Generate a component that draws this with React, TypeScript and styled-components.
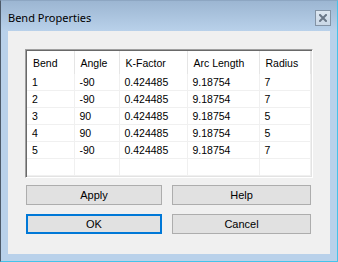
import React from 'react';
import styled, { createGlobalStyle } from 'styled-components';

const GlobalStyle = createGlobalStyle`
  html, body {
    margin: 0;
    padding: 0;
    background: #b9d1ea;
  }
`;

const Window = styled.div`
  width: 338px;
  height: 262px;
  box-sizing: border-box;
  display: flex;
  flex-direction: column;
  background: #b9d1ea;
  border-left: 1px solid #4d5a69;
  border-top: 1px solid #8da6c2;
  border-right: 1px solid #45c3ea;
  border-bottom: 1px solid #45c3ea;
  font-family: 'Liberation Sans', Arial, sans-serif;
`;

const TitleBar = styled.div`
  height: 30px;
  flex: none;
  display: flex;
  align-items: center;
  justify-content: space-between;
  padding: 0 6px 0 7px;
  background: linear-gradient(to bottom, #9cb6d2, #b9d1ea);
`;

const Title = styled.span`
  font-family: 'Noto Sans', 'Open Sans', sans-serif;
  font-size: 11px;
  color: #000;
  margin-top: 2px;
`;

const CloseButton = styled.div`
  width: 14px;
  height: 14px;
  border: 1px solid #8393a5;
  background: linear-gradient(to bottom, #dde7f1, #c9d7e6);
  display: flex;
  align-items: center;
  justify-content: center;
  margin-top: 3px;
`;

const Client = styled.div`
  flex: none;
  height: 223px;
  margin: 0 7px;
  box-sizing: border-box;
  background: #f0f0f0;
  padding: 18px 17px 0 17px;
  display: flex;
  flex-direction: column;
`;

const ListBox = styled.div`
  height: 129px;
  box-sizing: border-box;
  background: #fff;
  border: 1px solid;
  border-color: #a0a0a0 #fff #fff #a0a0a0;
  box-shadow: inset 1px 1px 0 #696969, inset -1px -1px 0 #e3e3e3;
  padding: 1px;
  overflow: hidden;
`;

const Grid = styled.table`
  border-collapse: collapse;
  table-layout: fixed;
  width: 100%;
  font-size: 10.5px;
  color: #000;
`;

const Col = styled.col<{ $w?: number }>`
  width: ${p => (p.$w ? `${p.$w}px` : 'auto')};
`;

const HeadCell = styled.th`
  height: 23px;
  padding: 0 0 0 6px;
  text-align: left;
  font-weight: normal;
  border-right: 1px solid #e5e5e5;
  white-space: nowrap;
  overflow: hidden;
`;

const Cell = styled.td`
  height: 16px;
  padding: 0 0 0 5px;
  border-right: 1px solid #f0f0f0;
  border-bottom: 1px solid #f0f0f0;
  white-space: nowrap;
  line-height: 16px;
  overflow: hidden;
`;

const ButtonGrid = styled.div`
  display: grid;
  grid-template-columns: 136px 139px;
  column-gap: 10px;
  row-gap: 9px;
  margin: 7px 0 0 1px;
`;

const Button = styled.button<{ $default?: boolean }>`
  height: 20px;
  box-sizing: border-box;
  background: #e1e1e1;
  border: ${p => (p.$default ? '2px solid #0078d7' : '1px solid #adadad')};
  font-family: 'Liberation Sans', Arial, sans-serif;
  font-size: 11px;
  color: #000;
  padding: 0;
`;

const columns = [
  { label: 'Bend', w: 47 },
  { label: 'Angle', w: 45 },
  { label: 'K-Factor', w: 68 },
  { label: 'Arc Length', w: 72 },
  { label: 'Radius' },
];

const bends = [
  ['1', '-90', '0.424485', '9.18754', '7'],
  ['2', '-90', '0.424485', '9.18754', '7'],
  ['3', '90', '0.424485', '9.18754', '5'],
  ['4', '90', '0.424485', '9.18754', '5'],
  ['5', '-90', '0.424485', '9.18754', '7'],
  ['', '', '', '', ''],
];

const CloseIcon = () => (
  <svg width="8" height="8" viewBox="0 0 8 8">
    <path d="M1 1L7 7M7 1L1 7" stroke="#6a7888" strokeWidth="2" strokeLinecap="square" />
  </svg>
);

const App = () => (
  <>
    <GlobalStyle />
    <Window>
      <TitleBar>
        <Title>Bend Properties</Title>
        <CloseButton>
          <CloseIcon />
        </CloseButton>
      </TitleBar>
      <Client>
        <ListBox>
          <Grid>
            <colgroup>
              {columns.map(c => (
                <Col key={c.label} $w={c.w} />
              ))}
            </colgroup>
            <thead>
              <tr>
                {columns.map(c => (
                  <HeadCell key={c.label}>{c.label}</HeadCell>
                ))}
              </tr>
            </thead>
            <tbody>
              {bends.map((row, i) => (
                <tr key={i}>
                  {row.map((v, j) => (
                    <Cell key={j}>{v}</Cell>
                  ))}
                </tr>
              ))}
            </tbody>
          </Grid>
        </ListBox>
        <ButtonGrid>
          <Button>Apply</Button>
          <Button>Help</Button>
          <Button $default>OK</Button>
          <Button>Cancel</Button>
        </ButtonGrid>
      </Client>
    </Window>
  </>
);

export default App;
